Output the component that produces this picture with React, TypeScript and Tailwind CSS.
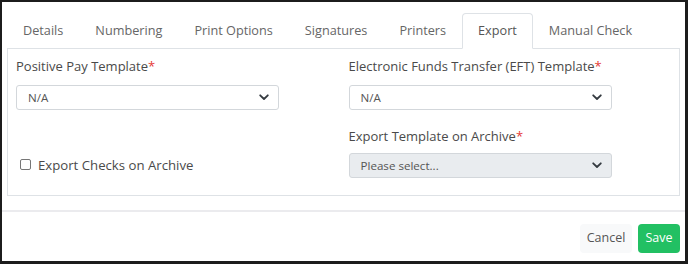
import React from "react";

const Chevron = () => (
  <svg width="10" height="7" viewBox="0 0 10 7" className="shrink-0">
    <path d="M1.2 1.3 L5 5 L8.8 1.3" fill="none" stroke="#343a40" strokeWidth="1.8" strokeLinecap="round" strokeLinejoin="round" />
  </svg>
);

const Select = ({ text, disabled }: { text: string; disabled?: boolean }) => (
  <div
    className={`w-[263px] h-[25px] flex items-center justify-between pl-[11px] pr-[9px] rounded-[3px] border border-[#d3d7db] text-[11.6px] text-[#555] ${
      disabled ? "bg-[#e9ecef]" : "bg-white"
    }`}
  >
    <span>{text}</span>
    <Chevron />
  </div>
);

const Label = ({ text }: { text: string }) => (
  <div className="text-[13px] leading-[21px] text-[#4a4a4a] whitespace-nowrap">
    {text}
    <span className="text-[#e53935]">*</span>
  </div>
);

export default function App() {
  const tabs = ["Details", "Numbering", "Print Options", "Signatures", "Printers", "Export", "Manual Check"];
  return (
    <div
      className="w-[688px] h-[264px] bg-white border-l-2 border-t-2 border-r-[3px] border-b-[3px] border-[#1c1c1c] flex flex-col"
      style={{ fontFamily: '"Open Sans", "Noto Sans", sans-serif' }}
    >
      <div className="px-[5px] pt-[11px]">
        <div className="flex">
          {tabs.map((t) => {
            const active = t === "Export";
            return (
              <div
                key={t}
                className={`h-[36px] px-[15px] flex items-center whitespace-nowrap text-[12.7px] rounded-t-[4px] border -mb-px ${
                  active
                    ? "border-[#dee2e6] border-b-white bg-white text-[#555] relative z-10"
                    : "border-transparent text-[#666]"
                }`}
              >
                {t}
              </div>
            );
          })}
        </div>
        <div className="border border-[#dee2e6] h-[148px] px-[8px] pt-[7px]">
          <div className="grid grid-cols-2 gap-x-[10px]">
            <div>
              <Label text="Positive Pay Template" />
              <div className="mt-[8px]">
                <Select text="N/A" />
              </div>
            </div>
            <div>
              <Label text="Electronic Funds Transfer (EFT) Template" />
              <div className="mt-[8px]">
                <Select text="N/A" />
              </div>
            </div>
            <div className="flex items-end pb-[2px] pl-[4px]">
              <div className="flex items-center gap-[7px]">
                <div className="w-[11px] h-[11px] rounded-[2px] border border-[#767676] bg-white mt-[-2px]" />
                <span className="text-[13.2px] leading-[21px] text-[#4a4a4a]">Export Checks on Archive</span>
              </div>
            </div>
            <div className="pt-[16px]">
              <Label text="Export Template on Archive" />
              <div className="mt-[6px]">
                <Select text="Please select..." disabled />
              </div>
            </div>
          </div>
        </div>
      </div>
      <div className="mt-[14px] h-[2px] bg-[#ebebee]" />
      <div className="flex justify-end gap-[6px] pr-[5px] pt-[12px]">
        <div className="h-[29px] w-[52px] flex items-center justify-center rounded-[4px] bg-[#f8f9fa] text-[12.5px] text-[#555]">
          Cancel
        </div>
        <div className="h-[29px] w-[42px] flex items-center justify-center rounded-[4px] bg-[#22c063] text-[12.5px] text-white font-medium">
          Save
        </div>
      </div>
    </div>
  );
}
